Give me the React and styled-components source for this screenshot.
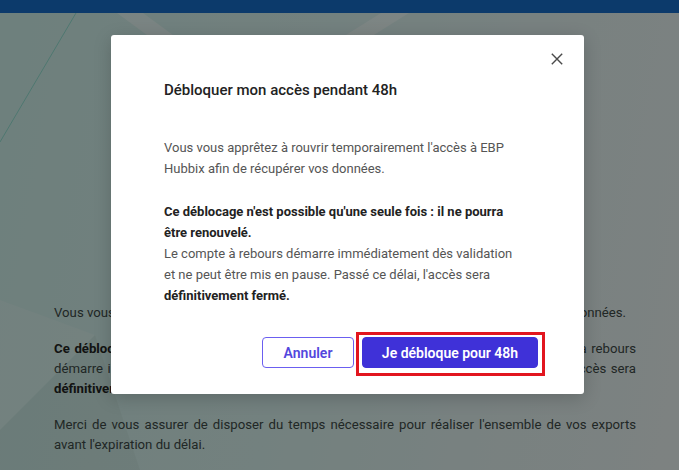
import React from "react";
import styled, { createGlobalStyle } from "styled-components";

const GlobalStyle = createGlobalStyle`
  html, body {
    margin: 0;
    padding: 0;
  }
  body {
    font-family: Roboto, "Noto Sans", Arial, sans-serif;
    -webkit-font-smoothing: antialiased;
  }
  * {
    box-sizing: border-box;
  }
`;

const Page = styled.div`
  position: relative;
  width: 679px;
  height: 470px;
  overflow: hidden;
  background: linear-gradient(100deg, #c8e9e3 0%, #d2ebe7 45%, #e4edec 100%);
`;

const Decor = styled.svg`
  position: absolute;
  inset: 0;
  width: 100%;
  height: 100%;
  pointer-events: none;
`;

const TopBar = styled.header`
  position: relative;
  height: 13px;
  background: #166bc4;
`;

const Content = styled.main`
  position: relative;
  width: 636px;
  padding: 290px 0 0 54px;
  font-size: 13.2px;
  line-height: 20px;
  color: #3c4845;
`;

const Paragraph = styled.p`
  margin: 0 0 16px;
  text-align: justify;
`;

const Strong = styled.strong`
  font-weight: 700;
  color: ${(p) => p.$tone || "inherit"};
`;

const Overlay = styled.div`
  position: absolute;
  inset: 0;
  display: flex;
  align-items: flex-start;
  justify-content: flex-start;
  padding: 35px 0 0 111px;
  background: rgba(0, 0, 0, 0.45);
`;

const Dialog = styled.section`
  position: relative;
  display: flex;
  flex-direction: column;
  width: 473px;
  height: 359px;
  padding: 45px 46px 26px 53px;
  background: #ffffff;
  border-radius: 3px;
  box-shadow: 0 4px 18px rgba(0, 0, 0, 0.18);
`;

const CloseButton = styled.button`
  position: absolute;
  top: 18px;
  right: 21px;
  width: 12px;
  height: 12px;
  padding: 0;
  border: 0;
  background: none;
  cursor: pointer;
  display: flex;
`;

const Title = styled.h2`
  margin: 0;
  font-size: 15px;
  line-height: 20px;
  font-weight: 500;
  color: #222222;
`;

const Body = styled.div`
  max-width: 362px;
  margin-top: 37px;
  font-size: 13px;
  line-height: 21px;
  color: #555555;
`;

const Text = styled.p`
  margin: 0;
  & + & {
    margin-top: 22px;
  }
`;

const Actions = styled.div`
  margin-top: auto;
  display: flex;
  justify-content: flex-end;
  gap: 8px;
`;

const Button = styled.button`
  height: 31px;
  width: ${(p) => p.$width}px;
  border-radius: 4px;
  font-family: Roboto, "Noto Sans", Arial, sans-serif;
  font-size: 14px;
  font-weight: 600;
  cursor: pointer;
  border: 1px solid ${(p) => (p.$primary ? "#3f31d8" : "#6b5ff0")};
  background: ${(p) => (p.$primary ? "#3f31d8" : "#ffffff")};
  color: ${(p) => (p.$primary ? "#ffffff" : "#5347dd")};
`;

const Highlight = styled.span`
  position: relative;
  display: inline-flex;
  &::after {
    content: "";
    position: absolute;
    top: -5px;
    left: -6px;
    right: -7px;
    bottom: -8px;
    border: 3px solid #e2161f;
    pointer-events: none;
  }
`;

export default function App() {
  return (
    <>
      <GlobalStyle />
      <Page>
        <Decor viewBox="0 0 679 470" aria-hidden="true">
          <polygon points="117,13 143,13 279,113 253,113" fill="rgba(255,255,255,0.35)" />
          <polygon points="381,13 409,13 249,113 221,113" fill="rgba(255,255,255,0.35)" />
          <polygon points="0,300 95,335 0,430" fill="rgba(255,255,255,0.14)" />
          <polygon points="95,335 0,430 0,470 140,470" fill="rgba(0,0,0,0.03)" />
          <line x1="76" y1="13" x2="0" y2="142" stroke="#8fd9cc" strokeWidth="1" />
        </Decor>
        <TopBar />
        <Content>
          <Paragraph>
            Vous vous apprêtez à rouvrir temporairement l'accès à EBP Hubbix afin de
            récupérer vos données.
          </Paragraph>
          <Paragraph>
            <Strong $tone="#1f2422">
              Ce déblocage n'est possible qu'une seule fois : il ne pourra être renouvelé.
            </Strong>{" "}
            Le compte à rebours démarre immédiatement dès validation et ne peut être mis en
            pause. Passé ce délai, l'accès sera{" "}
            <Strong $tone="#1f2422">définitivement fermé.</Strong>
          </Paragraph>
          <Paragraph>
            Merci de vous assurer de disposer du temps nécessaire pour réaliser l'ensemble de
            vos exports avant l'expiration du délai.
          </Paragraph>
        </Content>
        <Overlay>
          <Dialog role="dialog" aria-labelledby="unlock-title">
            <CloseButton aria-label="Fermer">
              <svg width="12" height="12" viewBox="0 0 12 12">
                <path d="M0.8 0.8 L11.2 11.2 M11.2 0.8 L0.8 11.2" stroke="#4a4a4a" strokeWidth="1.4" fill="none" />
              </svg>
            </CloseButton>
            <Title id="unlock-title">Débloquer mon accès pendant 48h</Title>
            <Body>
              <Text>
                Vous vous apprêtez à rouvrir temporairement l'accès à EBP Hubbix afin de
                récupérer vos données.
              </Text>
              <Text>
                <Strong $tone="#222222">
                  Ce déblocage n'est possible qu'une seule fois : il ne pourra être renouvelé.
                </Strong>
                <br />
                Le compte à rebours démarre immédiatement dès validation et ne peut être mis
                en pause. Passé ce délai, l'accès sera{" "}
                <Strong $tone="#222222">définitivement fermé.</Strong>
              </Text>
            </Body>
            <Actions>
              <Button $width={92}>Annuler</Button>
              <Highlight>
                <Button $primary $width={176}>
                  Je débloque pour 48h
                </Button>
              </Highlight>
            </Actions>
          </Dialog>
        </Overlay>
      </Page>
    </>
  );
}
